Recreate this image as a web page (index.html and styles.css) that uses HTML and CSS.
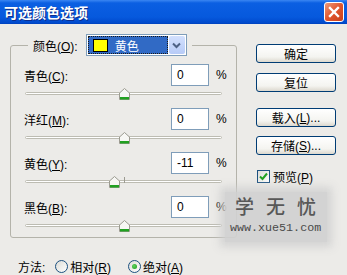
FILE: index.html
```html
<!DOCTYPE html>
<html lang="zh-CN">
<head>
    <meta charset="UTF-8">
    <title>可选颜色选项</title>
    <link rel="stylesheet" href="styles.css">
</head>
<body>

<div class="window">
    <!-- 标题栏 -->
    <div class="titlebar">
        <span class="title">可选颜色选项</span>
        <span class="close">
            <svg width="12" height="12" viewBox="0 0 12 12"><path d="M2 2 L10 10 M10 2 L2 10" stroke="#fff" stroke-width="2.4" stroke-linecap="square"/></svg>
        </span>
    </div>

    <div class="main">
        <fieldset class="group">
            <legend class="group-head">
                <span>颜色(<u>O</u>):</span>
                <div class="select">
                    <div class="sel-value"><span class="swatch"></span><span class="sel-text">黄色</span></div>
                    <div class="sel-arrow">
                        <svg width="9" height="7" viewBox="0 0 9 7"><path d="M1 1.5 L4.5 5 L8 1.5" fill="none" stroke="#4d6185" stroke-width="2"/></svg>
                    </div>
                </div>
            </legend>

            <div class="channel">
                <div class="channel-top"><span class="lbl">青色(<u>C</u>):</span><div class="num">0</div><span class="pct">%</span></div>
                <div class="slider"><div class="track"></div><svg class="thumb" style="left:95px" viewBox="0 0 11 12"><path d="M0.5 5 L5.5 0.5 L10.5 5 L10.5 11.5 L0.5 11.5 Z" fill="#f7f7f4" stroke="#9c9b91"/><rect x="1" y="9" width="9" height="2.5" fill="#21a121"/></svg></div>
            </div>

            <div class="channel">
                <div class="channel-top"><span class="lbl">洋红(<u>M</u>):</span><div class="num">0</div><span class="pct">%</span></div>
                <div class="slider"><div class="track"></div><svg class="thumb" style="left:95px" viewBox="0 0 11 12"><path d="M0.5 5 L5.5 0.5 L10.5 5 L10.5 11.5 L0.5 11.5 Z" fill="#f7f7f4" stroke="#9c9b91"/><rect x="1" y="9" width="9" height="2.5" fill="#21a121"/></svg></div>
            </div>

            <div class="channel">
                <div class="channel-top"><span class="lbl">黄色(<u>Y</u>):</span><div class="num">-11</div><span class="pct">%</span></div>
                <div class="slider"><div class="track"></div><span class="tick"></span><svg class="thumb" style="left:85px" viewBox="0 0 11 12"><path d="M0.5 5 L5.5 0.5 L10.5 5 L10.5 11.5 L0.5 11.5 Z" fill="#f7f7f4" stroke="#9c9b91"/><rect x="1" y="9" width="9" height="2.5" fill="#21a121"/></svg></div>
            </div>

            <div class="channel">
                <div class="channel-top"><span class="lbl">黑色(<u>B</u>):</span><div class="num">0</div><span class="pct">%</span></div>
                <div class="slider"><div class="track"></div><svg class="thumb" style="left:95px" viewBox="0 0 11 12"><path d="M0.5 5 L5.5 0.5 L10.5 5 L10.5 11.5 L0.5 11.5 Z" fill="#f7f7f4" stroke="#9c9b91"/><rect x="1" y="9" width="9" height="2.5" fill="#21a121"/></svg></div>
            </div>
        </fieldset>

        <!-- 右侧按钮 -->
        <div class="side">
            <div class="btn">确定</div>
            <div class="btn gap-s">复位</div>
            <div class="btn gap-l">载入(<u>L</u>)...</div>
            <div class="btn gap-xs">存储(<u>S</u>)...</div>
            <label class="check">
                <span class="box"><svg width="9" height="9" viewBox="0 0 9 9"><path d="M1 4.5 L3.5 7 L8 1.5" fill="none" stroke="#21a121" stroke-width="2"/></svg></span>
                <span>预览(<u>P</u>)</span>
            </label>
        </div>
    </div>

    <div class="method">
        <span class="method-lbl">方法:</span>
        <span class="radio"></span><span>相对(<u>R</u>)</span>
        <span class="radio on"></span><span>绝对(<u>A</u>)</span>
    </div>

    <!-- 水印 -->
    <div class="watermark">
        <div class="wm-big">学无忧</div>
        <div class="wm-url">www.xue51.com</div>
    </div>
</div>

</body>
</html>
```

FILE: styles.css
```css
* {
    box-sizing: border-box;
}

body {
    margin: 0;
    width: 347px;
    height: 275px;
    overflow: hidden;
    font-family: "Liberation Sans", "Noto Sans CJK SC", sans-serif;
    font-size: 12px;
    color: #000;
    background-color: #ecebe8;
}

u {
    text-decoration: underline;
    text-underline-offset: 1px;
}

.window {
    position: relative;
    height: 275px;
}

/* 标题栏 */
.titlebar {
    height: 24px;
    display: flex;
    align-items: center;
    justify-content: space-between;
    padding: 0 3px 0 4px;
    background: linear-gradient(#3a86f2 0, #0b5fe2 3px, #0659dd 17px, #0049cc 23px, #003fb8 24px);
}

.title {
    color: #fff;
    font-family: "Noto Sans CJK SC", sans-serif;
    font-weight: bold;
    font-size: 14px;
    text-shadow: 1px 1px #0c2d8c;
}

.close {
    width: 20px;
    height: 20px;
    border: 1px solid #fff;
    border-radius: 3px;
    background: linear-gradient(135deg, #ed9a7a, #e0562e 50%, #c8401c);
    display: flex;
    align-items: center;
    justify-content: center;
}

/* 主体 */
.main {
    display: flex;
    padding: 10px 11px 0 10px;
    gap: 19px;
}

.group {
    margin: 0;
    padding: 8px 10px 0 13px;
    width: 227px;
    min-width: 0;
    border: 1px solid #b4b3aa;
    border-radius: 3px;
}

.group-head {
    display: flex;
    align-items: center;
    gap: 8px;
    padding: 0 5px;
    margin-left: 4px;
}

.select {
    width: 101px;
    height: 22px;
    border: 1px solid #7f9db9;
    background-color: #fff;
    padding: 1px;
    display: flex;
    gap: 1px;
}

.sel-value {
    flex: 1;
    display: flex;
    align-items: center;
    background-color: #316ac5;
    border: 1px dotted #1a1a1a;
}

.swatch {
    width: 15px;
    height: 13px;
    margin-left: 4px;
    background-color: #ffff00;
    border: 1px solid #000;
}

.sel-text {
    margin-left: 7px;
    color: #fff;
}

.sel-arrow {
    width: 16px;
    border-radius: 2px;
    background: linear-gradient(#d3e0fd, #b7cbf7);
    display: flex;
    align-items: center;
    justify-content: center;
}

/* 通道行 */
.channel-top {
    display: flex;
    align-items: center;
    height: 22px;
}

.channel-top .lbl {
    flex: 1;
}

.num {
    width: 38px;
    height: 22px;
    border: 1px solid #7f9db9;
    background-color: #fff;
    padding-left: 5px;
    line-height: 20px;
}

.pct {
    width: 10px;
    margin-left: 7px;
}

.slider {
    position: relative;
    height: 22px;
    padding-top: 6px;
}

.channel:last-child .slider {
    height: 19px;
}

.track {
    margin: 0 4px 0 1px;
    height: 3px;
    border: 1px solid #bdbcb2;
    border-radius: 2px;
    background-color: #fff;
}

.tick {
    position: absolute;
    left: 100px;
    top: 3px;
    width: 1px;
    height: 6px;
    background-color: #9c9b91;
}

.thumb {
    position: absolute;
    top: 2px;
    width: 11px;
    height: 12px;
}

/* 右侧按钮 */
.side {
    display: flex;
    flex-direction: column;
    width: 80px;
    padding-top: 10px;
}

.btn {
    height: 19px;
    border: 1px solid #003c74;
    border-radius: 3px;
    background: linear-gradient(#ffffff, #f4f4f0 70%, #dcd8ce);
    display: flex;
    align-items: center;
    justify-content: center;
}

.gap-s {
    margin-top: 10px;
}

.gap-l {
    margin-top: 16px;
}

.gap-xs {
    margin-top: 9px;
}

.check {
    display: flex;
    align-items: center;
    gap: 3px;
    margin: 15px 0 0 1px;
    height: 13px;
}

.check .box {
    width: 13px;
    height: 13px;
    border: 1px solid #1c5180;
    background: linear-gradient(135deg, #dcdcd6, #fff);
    display: flex;
    align-items: center;
    justify-content: center;
}

/* 方法 */
.method {
    display: flex;
    align-items: center;
    height: 16px;
    margin-top: 20px;
    padding-left: 18px;
}

.method-lbl {
    margin-right: 10px;
}

.radio {
    position: relative;
    width: 13px;
    height: 13px;
    margin-right: 2px;
    border: 1px solid #1c5180;
    border-radius: 50%;
    background: linear-gradient(135deg, #dcdcd6, #fff);
}

.radio.on {
    margin-left: 17px;
}

.radio.on::after {
    content: "";
    position: absolute;
    left: 3px;
    top: 3px;
    width: 5px;
    height: 5px;
    border-radius: 50%;
    background: radial-gradient(circle at 40% 40%, #5fd35f, #1a9a1a);
}

/* 水印 */
.watermark {
    position: absolute;
    left: 225px;
    top: 192px;
    width: 102px;
    height: 50px;
    background-color: rgba(208, 208, 208, 0.92);
    box-shadow: 0 0 8px 5px rgba(208, 208, 208, 0.85);
}

.wm-big {
    white-space: nowrap;
    font-family: "Noto Sans CJK SC", sans-serif;
    font-weight: 500;
    font-size: 19px;
    line-height: 28px;
    letter-spacing: 12px;
    padding-left: 10px;
    color: #585858;
}

.wm-url {
    white-space: nowrap;
    font-family: "Liberation Mono", monospace;
    font-size: 11.7px;
    line-height: 16px;
    padding-left: 5px;
    color: #4a4a4a;
}
```
